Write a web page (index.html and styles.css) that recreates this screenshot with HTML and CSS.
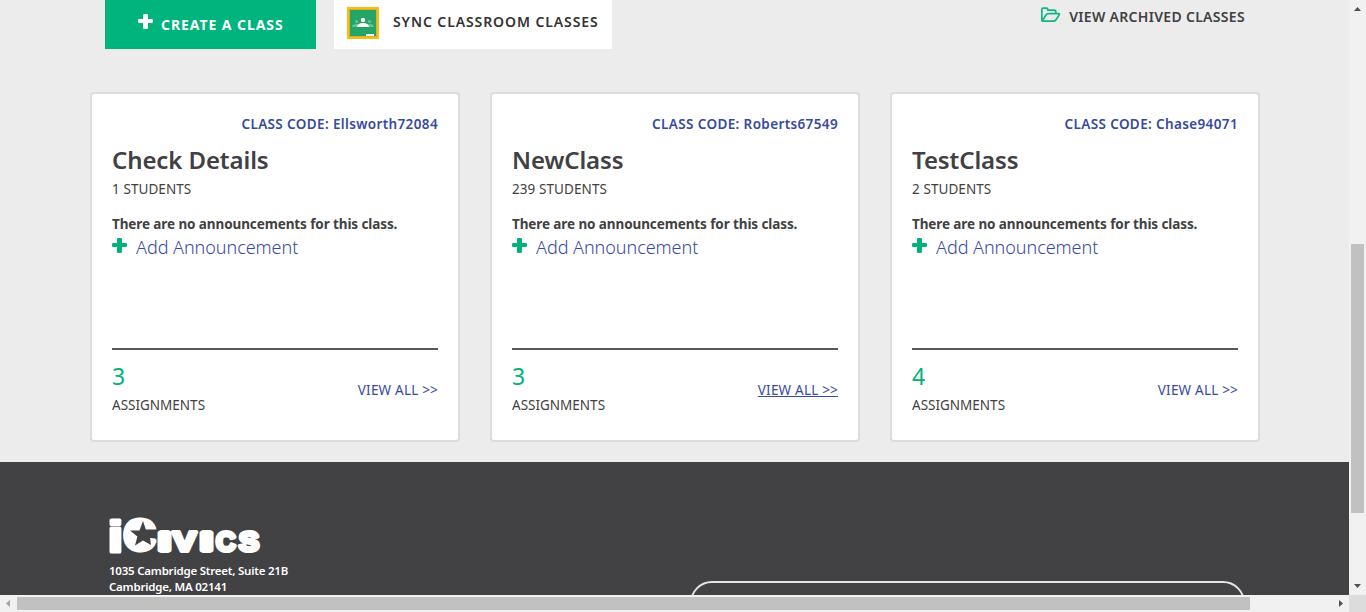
FILE: index.html
```html
<!DOCTYPE html>
<html lang="en">
<head>
<meta charset="utf-8">
<title>iCivics - My Classes</title>
<link rel="stylesheet" href="styles.css">
</head>
<body>
<svg class="defs" aria-hidden="true">
  <symbol id="plus" viewBox="0 0 15 15"><path d="M6.3 0h2.4q1.3 0 1.3 1.3V5h3.7Q15 5 15 6.3v1.4Q15 9 13.700 9H10v4.700Q10 15 8.700 15H6.300Q5 15 5 13.700V9H1.300Q0 9 0 7.700V6.300Q0 5 1.300 5H5V1.300Q5 0 6.300 0z" fill="currentColor"/></symbol>
</svg>
<div class="window">
  <div class="page">
    <main class="classes">
      <div class="toolbar">
        <a class="create"><svg class="plus"><use href="#plus"/></svg><span>CREATE A CLASS</span></a>
        <a class="sync">
          <svg class="classroom" viewBox="0 0 32 32">
            <rect width="32" height="32" fill="#fbbc12"/>
            <rect x="2" y="2" width="28" height="28" fill="#d9b127"/>
            <rect x="3" y="3" width="26" height="26" fill="#23a566"/>
            <g fill="#69c197"><circle cx="9.500" cy="14.500" r="1.600"/><circle cx="22.500" cy="14.500" r="1.600"/><path d="M5 20q0-3 4.500-3 3 0 3.500 3zM19 20q.5-3 3.500-3 4.500 0 4.500 3z"/></g>
            <circle cx="16" cy="13" r="2.200" fill="#fff"/><path d="M10 20q.5-4 6-4t6 4z" fill="#fff"/>
            <rect x="19" y="27" width="8" height="2" fill="#f5f5f5"/>
          </svg>
          <span>SYNC CLASSROOM CLASSES</span>
        </a>
        <a class="archived">
          <svg class="folder" viewBox="0 0 21 16"><path d="M1.800 13V2.500Q1.800 1.200 3 1.200h3.600q1.200 0 1.200 1.200v.8h6.700q1.300 0 1.300 1.300v2M2.200 13.700L6 8q.8-1.300 2.300-1.300h10.300q1.400 0 .6 1.200l-3.400 5q-.8 1.200-2.300 1.200H3q-1.200 0-1.200-1.200" fill="none" stroke="#0fb785" stroke-width="1.700" stroke-linejoin="round"/></svg>
          <span>VIEW ARCHIVED CLASSES</span>
        </a>
      </div>
      <div class="cards">
        <section class="card">
          <div class="code"><span>CLASS CODE: Ellsworth72084</span></div>
          <h2>Check Details</h2>
          <div class="students">1 STUDENTS</div>
          <div class="notice">There are no announcements for this class.</div>
          <a class="add"><svg class="plus"><use href="#plus"/></svg><span>Add Announcement</span></a>
          <div class="summary"><div><div class="count">3</div><div class="label">ASSIGNMENTS</div></div><a class="all">VIEW ALL &gt;&gt;</a></div>
        </section>
        <section class="card">
          <div class="code"><span>CLASS CODE: Roberts67549</span></div>
          <h2>NewClass</h2>
          <div class="students">239 STUDENTS</div>
          <div class="notice">There are no announcements for this class.</div>
          <a class="add"><svg class="plus"><use href="#plus"/></svg><span>Add Announcement</span></a>
          <div class="summary"><div><div class="count">3</div><div class="label">ASSIGNMENTS</div></div><a class="all active">VIEW ALL &gt;&gt;</a></div>
        </section>
        <section class="card">
          <div class="code"><span>CLASS CODE: Chase94071</span></div>
          <h2>TestClass</h2>
          <div class="students">2 STUDENTS</div>
          <div class="notice">There are no announcements for this class.</div>
          <a class="add"><svg class="plus"><use href="#plus"/></svg><span>Add Announcement</span></a>
          <div class="summary"><div><div class="count">4</div><div class="label">ASSIGNMENTS</div></div><a class="all">VIEW ALL &gt;&gt;</a></div>
        </section>
      </div>
    </main>
    <footer class="footer">
      <div class="about">
        <svg class="logo" viewBox="0 0 152 38">
          <text class="logo-i" x="-1.500" y="35.500" textLength="16" lengthAdjust="spacingAndGlyphs">i</text>
          <text class="logo-c" x="16" y="33" textLength="29" lengthAdjust="spacingAndGlyphs">C</text>
          <text class="bar" x="50.500" y="34" textLength="10" lengthAdjust="spacingAndGlyphs">I</text>
          <text x="64" y="35" textLength="23" lengthAdjust="spacingAndGlyphs">V</text>
          <text class="bar" x="92.500" y="34" textLength="10" lengthAdjust="spacingAndGlyphs">I</text>
          <text x="107" y="35" textLength="19.500" lengthAdjust="spacingAndGlyphs">C</text>
          <text x="130" y="35" textLength="20" lengthAdjust="spacingAndGlyphs">S</text>
          <rect x="27" y="12" width="10" height="13" fill="#fff"/>
          <path d="M34 5l2.800 8.500H47v9l-6-.5 1 7-8-4.500-8 5 2.400-9-7.400-6h9.500z" fill="#424143"/>
        </svg>
        <div class="address">1035 Cambridge Street, Suite 21B<br>Cambridge, MA 02141</div>
      </div>
      <div class="field"><i></i></div>
    </footer>
  </div>
  <div class="vbar">
    <svg viewBox="0 0 17 17"><path d="M5 11l3.500-4 3.500 4z" fill="#505050"/></svg>
    <div class="vthumb"></div>
    <svg class="down" viewBox="0 0 17 17"><path d="M5 6h7l-3.500 4z" fill="#505050"/></svg>
  </div>
  <div class="hbar">
    <svg viewBox="0 0 17 17"><path d="M10 5v7L6 8.500z" fill="#a3a3a3"/></svg>
    <div class="hthumb"></div>
    <svg class="right" viewBox="0 0 17 17"><path d="M7 5v7l4-3.500z" fill="#505050"/></svg>
  </div>
  <div class="corner"></div>
</div>
</body>
</html>
```

FILE: styles.css
```css
* { box-sizing: border-box; }
body { margin: 0; overflow: hidden; font-family: "Noto Sans", sans-serif; color: #414042; }
svg { display: block; flex: none; }
.defs { display: none; }
.window { display: grid; grid-template: 595px 17px / 1349px 17px; width: 1366px; height: 612px; }
.page { overflow: hidden; background: #ececec; }
.classes { height: 462px; }

.toolbar { display: flex; padding: 0 104px 0 105px; height: 92px; white-space: nowrap; }
.plus { width: 15px; height: 15px; color: #00b37d; }
.create { display: flex; width: 211px; height: 49px; padding: 14px 0 0 33px; gap: 8px; background: #00b47e; color: #fff; font-size: 14px; line-height: 21px; font-weight: 700; letter-spacing: 0.93px; }
.create .plus { color: #fff; }
.sync { display: flex; width: 278px; height: 49px; margin-left: 18px; padding: 7px 0 0 13px; gap: 14px; background: #fff; color: #333; font-size: 14px; line-height: 29px; font-weight: 600; letter-spacing: 0.9px; }
.classroom { width: 32px; height: 32px; }
.archived { display: flex; margin-left: auto; padding-top: 7px; gap: 8px; font-size: 14px; line-height: 20px; font-weight: 600; letter-spacing: 0.31px; }
.folder { width: 21px; height: 16px; }

.cards { display: grid; grid-template-columns: repeat(3, 370px); gap: 30px; padding-left: 90px; }
.card { display: flex; flex-direction: column; height: 350px; padding: 20px; border: 2px solid #dcdcdc; border-radius: 4px; background: #fff; white-space: nowrap; }
.code { text-align: right; font-size: 13.500px; line-height: 20px; font-weight: 600; letter-spacing: 0.37px; color: #374a9b; }
.card h2 { margin: 11px 0 0; font-size: 24px; line-height: 30px; font-weight: 600; letter-spacing: -0.1px; }
.students, .label, .all { font-size: 13.500px; line-height: 20px; letter-spacing: 0.08px; }
.students { margin-top: 4px; }
.notice { margin-top: 15px; font-size: 13.500px; line-height: 20px; font-weight: 700; letter-spacing: -0.1px; }
.add { display: flex; gap: 9px; margin-top: 2px; font-size: 18px; line-height: 22px; font-weight: 300; letter-spacing: -0.05px; color: #374a9b; }
.add .plus { margin-top: 2px; }
.summary { display: flex; justify-content: space-between; margin-top: auto; height: 72px; border-top: 2px solid #58585a; }
.count { margin-top: 11px; font-size: 23px; line-height: 30px; color: #00b37d; }
.label { margin-top: 4px; letter-spacing: 0; }
.all { margin-top: 30px; letter-spacing: 0.2px; color: #374a9b; }
.active { text-decoration: underline; }

.footer { display: flex; height: 240px; padding: 54px 104px 0 109px; background: #424143; }
.about { width: 582px; }
.logo { width: 152px; height: 38px; overflow: visible; }
.logo text { fill: #fff; stroke: #fff; stroke-linejoin: round; font-family: "Liberation Sans", sans-serif; font-size: 27.500px; font-weight: 700; stroke-width: 4px; }
.logo .logo-i { font-size: 44px; stroke-width: 3px; }
.logo .logo-c { font-size: 40px; stroke-width: 7px; }
.logo .bar { font-size: 24.500px; stroke-width: 6px; }
.address { margin-top: 9px; color: #fff; font-size: 11.500px; line-height: 16px; font-weight: 600; letter-spacing: -0.22px; white-space: nowrap; }
.field { width: 555px; height: 50px; margin-top: 65px; border: 2px solid #e6e4e2; border-radius: 22px; }
.field i { display: block; width: 2px; height: 2px; margin: 12px 0 0 513px; background: #ddd; }

.vbar { display: flex; flex-direction: column; background: #f1f1f1; }
.vbar svg, .hbar svg { width: 17px; height: 17px; }
.vthumb { width: 13px; height: 269px; margin: 227px 0 0 2px; background: #c1c1c1; }
.down { margin-top: auto; }
.hbar { display: flex; background: #f1f1f1; }
.hthumb { width: 1233px; height: 13px; margin-top: 2px; background: #c1c1c1; }
.right { margin-left: auto; }
.corner { background: #dcdcdc; }
```
